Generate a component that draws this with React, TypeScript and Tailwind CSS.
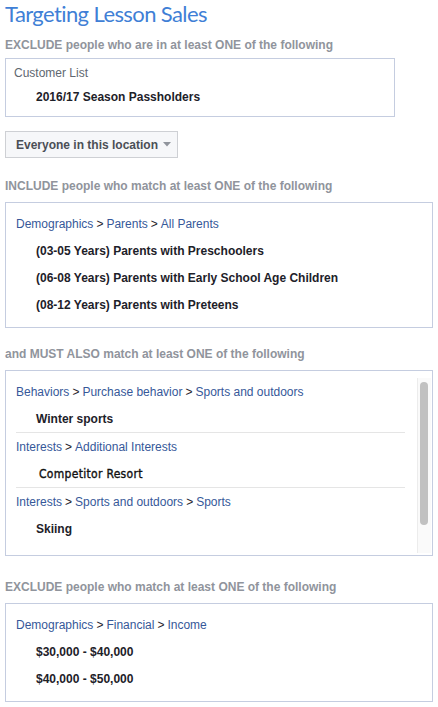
const LINK = 'text-[#365899]';

function Crumbs({ parts }: { parts: string[] }) {
  return (
    <div className="h-[27px] flex items-center pl-[10px] text-[12px] text-[#1d2129]">
      {parts.map((p, i) => (
        <span key={i}>
          {i > 0 && <span className="mx-[3px]">&gt;</span>}
          <span className={LINK}>{p}</span>
        </span>
      ))}
    </div>
  );
}

function Item({ children }: { children: React.ReactNode }) {
  return (
    <div className="h-[27px] flex items-center pl-[30px] text-[12px] font-bold text-[#1d2129]">
      {children}
    </div>
  );
}

function Label({ children, className = '' }: { children: React.ReactNode; className?: string }) {
  return (
    <div className={`h-[16px] leading-[16px] text-[12px] font-bold text-[#90949c] ${className}`}>
      {children}
    </div>
  );
}

export default function App() {
  return (
    <div className="w-[438px] min-h-[707px] bg-white px-[5px] font-['Liberation_Sans',Arial,sans-serif]">
      <h1 className="h-[28px] leading-[28px] font-['Lato',sans-serif] text-[22px] tracking-[-0.6px] text-[#3f7fd6]">
        Targeting Lesson Sales
      </h1>

      {/* Exclude customer list */}
      <Label className="mt-[9px]">EXCLUDE people who are in at least ONE of the following</Label>
      <div className="mt-[5px] w-[390px] border border-[#c5cde0] pt-[6px] pb-[11px]">
        <div className="h-[16px] leading-[16px] pl-[8px] text-[12px] text-[#606770]">Customer List</div>
        <div className="mt-[8px] h-[16px] leading-[16px] pl-[30px] text-[12px] font-bold text-[#1d2129]">
          2016/17 Season Passholders
        </div>
      </div>

      <button className="mt-[14px] h-[27px] w-[173px] flex items-center pl-[10px] gap-[5px] bg-[#f6f7f9] border border-[#ced0d4] text-[12px] font-bold text-[#4b4f56]">
        Everyone in this location
        <svg width="8" height="5" viewBox="0 0 8 5">
          <path d="M0 0h8L4 4.5z" fill="#90949c" />
        </svg>
      </button>

      {/* Include */}
      <Label className="mt-[20px]">INCLUDE people who match at least ONE of the following</Label>
      <div className="mt-[8px] border border-[#c5cde0] pt-[7px] pb-[9px]">
        <Crumbs parts={['Demographics', 'Parents', 'All Parents']} />
        <Item>(03-05 Years) Parents with Preschoolers</Item>
        <Item>(06-08 Years) Parents with Early School Age Children</Item>
        <Item>(08-12 Years) Parents with Preteens</Item>
      </div>

      {/* Must also */}
      <Label className="mt-[18px]">and MUST ALSO match at least ONE of the following</Label>
      <div className="mt-[8px] border border-[#c5cde0] flex">
        <div className="flex-1 pt-[7px] pb-[13px] pr-[12px]">
          <Crumbs parts={['Behaviors', 'Purchase behavior', 'Sports and outdoors']} />
          <Item>Winter sports</Item>
          <div className="ml-[10px] h-px bg-[#e5e5e5]" />
          <Crumbs parts={['Interests', 'Additional Interests']} />
          <div className="h-[27px] flex items-center pl-[33px] text-[12px] tracking-[0.3px] text-[#111] [-webkit-text-stroke:0.35px_#111] font-['DejaVu_Sans_Condensed','DejaVu_Sans',sans-serif]">
            Competitor Resort
          </div>
          <div className="ml-[10px] h-px bg-[#e5e5e5]" />
          <Crumbs parts={['Interests', 'Sports and outdoors', 'Sports']} />
          <Item>Skiing</Item>
        </div>
        <div className="w-[14px] mr-px mt-[7px] mb-[2px] bg-[#fafafa] border-l border-[#ececec] pt-[4px] pl-[2px]">
          <div className="w-[8px] h-[143px] rounded-full bg-[#c1c1c1]" />
        </div>
      </div>

      {/* Exclude income */}
      <Label className="mt-[23px]">EXCLUDE people who match at least ONE of the following</Label>
      <div className="mt-[8px] border border-[#c5cde0] pt-[7px] pb-[9px]">
        <Crumbs parts={['Demographics', 'Financial', 'Income']} />
        <Item>$30,000 - $40,000</Item>
        <Item>$40,000 - $50,000</Item>
      </div>
    </div>
  );
}
